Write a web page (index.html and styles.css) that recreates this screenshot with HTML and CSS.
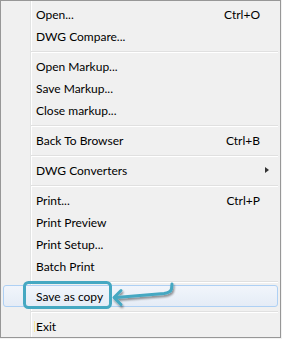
FILE: index.html
```html
<!DOCTYPE html>
<html>
<head>
<meta charset="utf-8">
<link rel="stylesheet" href="styles.css">
</head>
<body>
<div class="menu">
  <div class="item"><span class="label">Open...</span><span class="key">Ctrl+O</span></div>
  <div class="item"><span class="label">DWG Compare...</span></div>
  <div class="sep"></div>
  <div class="item"><span class="label">Open Markup...</span></div>
  <div class="item"><span class="label">Save Markup...</span></div>
  <div class="item"><span class="label">Close markup...</span></div>
  <div class="sep"></div>
  <div class="item"><span class="label">Back To Browser</span><span class="key">Ctrl+B</span></div>
  <div class="sep"></div>
  <div class="item sub"><span class="label">DWG Converters</span><span class="arrow"></span></div>
  <div class="sep"></div>
  <div class="item"><span class="label">Print...</span><span class="key">Ctrl+P</span></div>
  <div class="item"><span class="label">Print Preview</span></div>
  <div class="item"><span class="label">Print Setup...</span></div>
  <div class="item"><span class="label">Batch Print</span></div>
  <div class="sep"></div>
  <div class="item hot"><span class="label">Save as copy</span></div>
  <div class="sep"></div>
  <div class="item exit"><span class="label">Exit</span></div>
  <svg class="callout" width="281" height="338" viewBox="0 0 281 338">
    <defs>
      <filter id="sh" x="-20%" y="-50%" width="140%" height="200%">
        <feGaussianBlur in="SourceAlpha" stdDeviation="1"/>
        <feOffset dx="1" dy="1.5" result="b"/>
        <feComponentTransfer><feFuncA type="linear" slope="0.45"/></feComponentTransfer>
        <feMerge><feMergeNode/><feMergeNode in="SourceGraphic"/></feMerge>
      </filter>
    </defs>
    <rect x="24.5" y="282.5" width="86" height="25" rx="4" fill="none" stroke="#45a8c2" stroke-width="3"/>
    <g filter="url(#sh)" fill="none" stroke="#45a8c2" stroke-width="3" stroke-linecap="round" stroke-linejoin="round">
      <path d="M172 284 L171.5 289 Q170.5 292.5 164 293.5 L116 297.5"/>
      <path d="M121 290.5 L114 297.5 L121 304.5"/>
    </g>
  </svg>
</div>
</body>
</html>
```
FILE: styles.css
```css
html, body {
  margin: 0;
  padding: 0;
  background: #f2f2f2;
}
.menu {
  position: relative;
  box-sizing: border-box;
  width: 281px;
  height: 338px;
  border: 1px solid #979797;
  padding: 2px 2px 0 2px;
  background-color: #f0f0f0;
  background-image: linear-gradient(to right, transparent 29px, #e2e3e3 29px, #e2e3e3 30px, #ffffff 30px, #ffffff 31px, transparent 31px);
  font-family: "Lato", "Liberation Sans", sans-serif;
  font-size: 12px;
  color: #000;
}
.item {
  box-sizing: border-box;
  height: 22px;
  display: flex;
  align-items: center;
  padding: 0 17px 0 32px;
  border: 1px solid transparent;
  border-radius: 3px;
}
.label {
  flex: 1;
}
.key {
  white-space: nowrap;
}
.sub {
  padding-right: 8px;
}
.arrow {
  width: 0;
  height: 0;
  border-top: 3.5px solid transparent;
  border-bottom: 3.5px solid transparent;
  border-left: 4px solid #333;
}
.sep {
  height: 8px;
  margin-left: 28px;
  background-image: linear-gradient(to bottom, transparent 4px, #e0e0e0 4px, #e0e0e0 5px, #ffffff 5px, #ffffff 6px, transparent 6px);
}
.hot {
  border-color: #aed0f4;
  background: linear-gradient(to bottom, #f1f5fb, #e5ecf6);
}
.exit .label {
  position: relative;
}
.exit .label::before {
  content: "";
  position: absolute;
  left: -2px;
  top: 2px;
  width: 1px;
  height: 11px;
  background: #f3e7a0;
}
.callout {
  position: absolute;
  left: -1px;
  top: -1px;
  pointer-events: none;
}
```
